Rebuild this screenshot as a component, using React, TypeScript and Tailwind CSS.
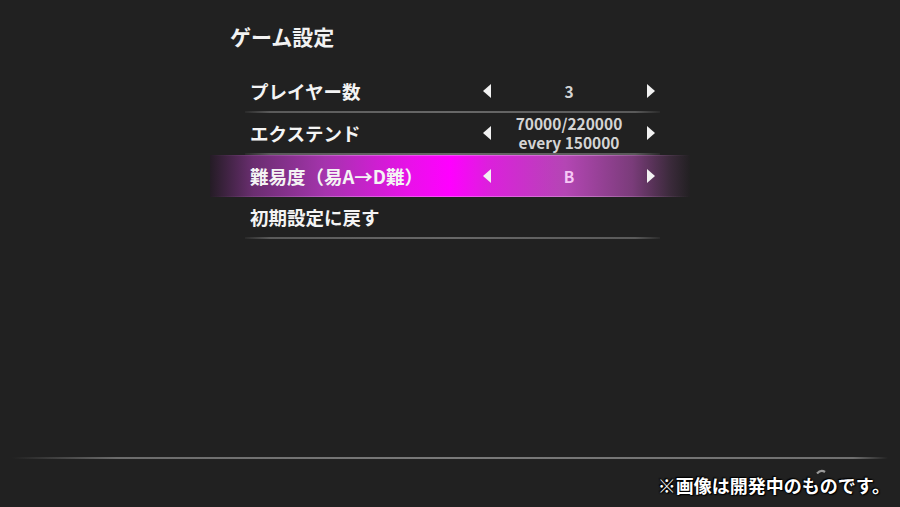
import React from 'react';

type Row = { label: string; value?: string[]; active?: boolean };

const ROWS: Row[] = [
  { label: 'プレイヤー数', value: ['3'] },
  { label: 'エクステンド', value: ['70000/220000', 'every 150000'] },
  { label: '難易度（易A→D難）', value: ['B'], active: true },
  { label: '初期設定に戻す' },
];

const FONT = 'font-["Noto_Sans_CJK_JP","Noto_Sans",sans-serif]';

function Arrow({ dir }: { dir: 'left' | 'right' }) {
  return (
    <svg width="8" height="14" viewBox="0 0 8 14" className="shrink-0">
      {dir === 'left' ? (
        <polygon points="8,0 8,14 0,7" fill="#f2f2f2" />
      ) : (
        <polygon points="0,0 0,14 8,7" fill="#f2f2f2" />
      )}
    </svg>
  );
}

function SettingRow({ row }: { row: Row }) {
  const body = (
    <div className="flex items-center h-[40px] pl-[5px]">
      <div className="w-[233px] text-[18.5px] leading-[22px] font-bold text-[#f4f4f4]">{row.label}</div>
      {row.value && (
        <>
          <Arrow dir="left" />
          <div
            className={`w-[156px] text-center text-[15.5px] leading-[19px] font-bold ${
              row.active ? 'text-[#f6c8f6]' : 'text-[#d4d4d4]'
            }`}
          >
            {row.value.map(v => (
              <div key={v}>{v}</div>
            ))}
          </div>
          <Arrow dir="right" />
        </>
      )}
    </div>
  );

  if (row.active) {
    return (
      <div className="relative -ml-[35px] -mr-[30px] pl-[35px] pr-[30px] h-[42px] pt-px bg-[linear-gradient(to_right,#241c25_0%,#6a2e70_9%,#a534ad_24%,#ea10ea_42%,#ff00ff_50%,#dc20dc_58%,#b446b4_74%,#7a3c7a_88%,#3a2a3a_96%,#222022_100%)]">
        <div className="absolute inset-x-0 top-0 h-px bg-[linear-gradient(to_right,transparent,rgba(255,200,255,0.35)_30%,rgba(255,200,255,0.35)_80%,transparent)]" />
        <div className="absolute inset-x-0 bottom-0 h-px bg-[linear-gradient(to_right,transparent,rgba(255,200,255,0.35)_30%,rgba(255,200,255,0.35)_80%,transparent)]" />
        {body}
      </div>
    );
  }

  return (
    <div className="h-[42px]">
      {body}
      <div className="h-[2px] bg-[linear-gradient(to_right,#2a2a2a_0%,#5a5a5a_6%,#686868_50%,#5a5a5a_94%,#2a2a2a_100%)]" />
    </div>
  );
}

export default function App() {
  return (
    <div className={`relative w-[900px] h-[507px] overflow-hidden bg-[#212121] flex flex-col ${FONT}`}>
      {/* Title */}
      <div className="pl-[230px] pt-[24px] text-[21px] leading-[24px] font-bold text-[#f2f2f2]">ゲーム設定</div>

      {/* Settings list */}
      <div className="ml-[245px] w-[415px] mt-[23px] flex flex-col">
        {ROWS.map(r => (
          <SettingRow key={r.label} row={r} />
        ))}
      </div>

      <div className="flex-1" />

      {/* Bottom rule */}
      <div className="mx-[12px] h-[2px] mb-[1px] bg-[linear-gradient(to_right,transparent_0%,#3a3a3a_4%,#6c6c6c_12%,#7a7a7a_50%,#707070_96%,transparent_100%)]" />

      {/* Notice */}
      <div className="relative h-[47px] flex justify-end pr-[10px] pt-[14px]">
        <svg width="10" height="5" viewBox="0 0 10 5" className="absolute left-[816px] top-[9px]">
          <path d="M1 4.5 Q5 0 9 3" stroke="#9a9a9a" strokeWidth="2.2" fill="none" />
        </svg>
        <span className="relative text-[18px] leading-[22px] font-bold text-white [text-shadow:0_0_2px_#000,0_0_2px_#000,1px_1px_1px_#000,-1px_-1px_1px_#000]">
          ※画像は開発中のものです。
        </span>
      </div>
    </div>
  );
}
